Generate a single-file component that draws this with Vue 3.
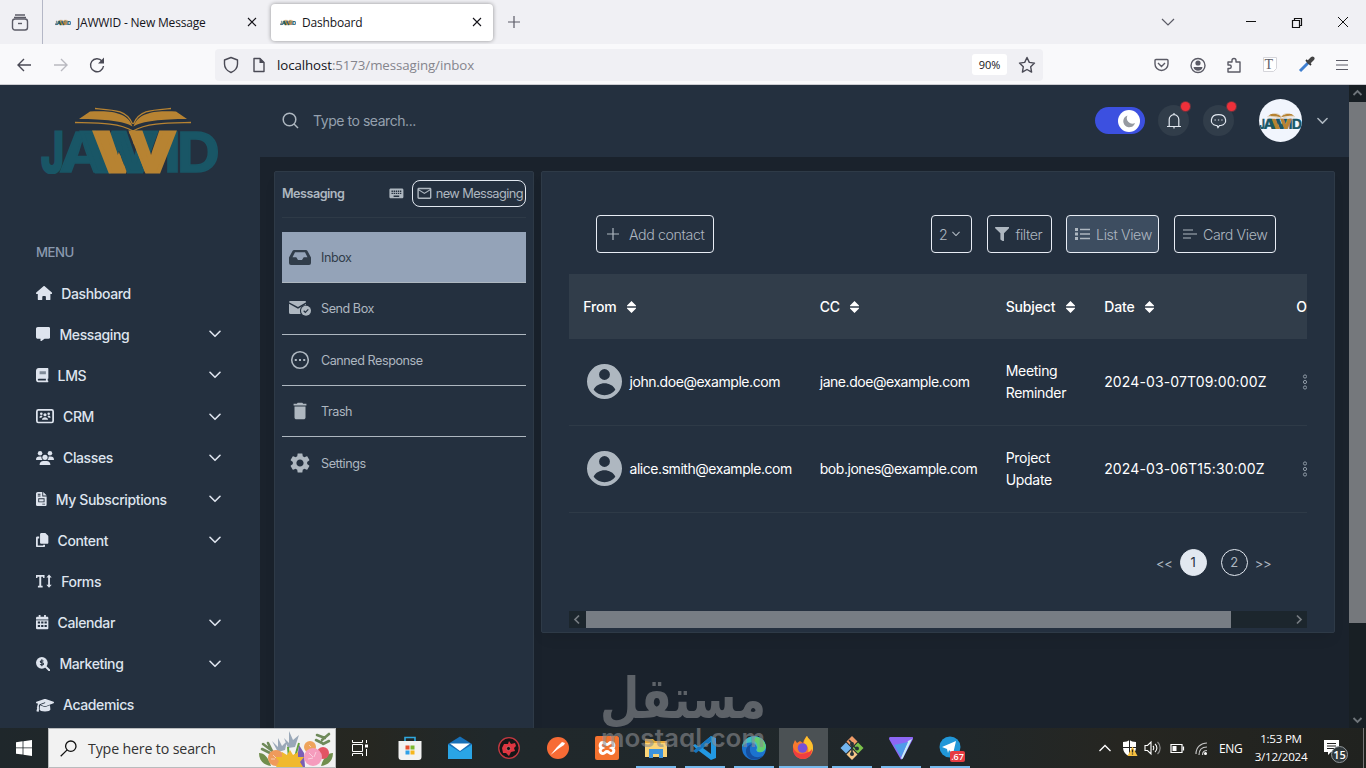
<template>
  <div class="screen">
    <!-- shared icons -->
    <svg class="sprite" width="0" height="0">
      <clipPath id="weave"><path d="M40 20h29l19 48H40zM87 20h60v48h-41z" /></clipPath>
      <symbol id="logo" viewBox="0 0 180 67">
        <g fill="#195666" stroke="#195666" stroke-width="1.500" font-family="Inter, sans-serif" font-weight="700" font-size="55">
          <text x="1" y="65" textLength="23" lengthAdjust="spacingAndGlyphs" stroke-width="3">J</text>
          <text x="19" y="65" textLength="47" lengthAdjust="spacingAndGlyphs">A</text>
          <text x="40" y="65" textLength="78" lengthAdjust="spacingAndGlyphs" stroke-width="3">W</text>
          <text x="124" y="65" textLength="17" lengthAdjust="spacingAndGlyphs">I</text>
          <text x="137" y="65" textLength="43" lengthAdjust="spacingAndGlyphs">D</text>
          <g clip-path="url(#weave)"><text x="53" y="65" textLength="83" lengthAdjust="spacingAndGlyphs" fill="#b78332" stroke="#b78332" stroke-width="3">W</text></g>
        </g>
        <g fill="#b78332">
          <path d="M39 12 50 4.500C68 4 87 4 92.500 19.500 84 14 64 12 39 12z" />
          <path d="M147 12 136 4.500C118 4 99 4 93.500 19.500 102 14 122 12 147 12z" />
        </g>
        <g fill="none" stroke="#b78332" stroke-width="1.300">
          <path d="M55 1.500C74 3 87 3 92.500 17M131 1.500C112 3 99 3 93.500 17" />
          <path d="M35 15.500c22 .5 44 0 58 8.500 14-8.500 36-8 58-8.500" />
        </g>
      </symbol>
      <symbol id="home" viewBox="0 0 576 512"><path d="M575.800 255.500c0 18-15 32.100-32 32.100h-32l.7 160.200V472c0 22.100-17.900 40-40 40H392c-22.100 0-40-17.900-40-40v-88c0-17.700-14.300-32-32-32h-64c-17.700 0-32 14.300-32 32v88c0 22.100-17.900 40-40 40h-80c-22.100 0-40-17.900-40-40V287.600H32c-18 0-32-14-32-32.100 0-9 3-17 10-24L266.400 8c7-7 15-8 22-8s15 2 21 7l255.400 224.500c8 7 12 15 11 24z" /></symbol>
      <symbol id="message" viewBox="0 0 512 512"><path d="M64 0C29 0 0 29 0 64v288c0 35 29 64 64 64h96v80c0 14 12 20 26 10l119-90h143c35 0 64-29 64-64V64c0-35-29-64-64-64z" /></symbol>
      <symbol id="book" viewBox="0 0 448 512">
        <path fill-rule="evenodd" d="M96 0C43 0 0 43 0 96v320c0 53 43 96 96 96h320c17.700 0 32-14.300 32-32s-14.300-32-32-32v-64c17.700 0 32-14.300 32-32V32c0-17.700-14.300-32-32-32zm0 384h256v64H96a32 32 0 0 1 0-64z" />
        <path fill="#808b98" d="M128 112h224v112H128z" />
      </symbol>
      <symbol id="crm" viewBox="0 0 576 460">
        <rect x="28" y="28" width="520" height="404" rx="50" fill="none" stroke="currentColor" stroke-width="56" />
        <circle cx="170" cy="150" r="42" /><circle cx="406" cy="150" r="42" /><circle cx="288" cy="182" r="50" />
        <path d="M110 280c0-80 80-90 100-50-25 20-30 30-34 50zM466 280c0-80-80-90-100-50 25 20 30 30 34 50zM190 346c0-110 196-110 196 0z" />
      </symbol>
      <symbol id="users" viewBox="0 0 640 512">
        <circle cx="144" cy="80" r="80" /><circle cx="496" cy="80" r="80" /><circle cx="320" cy="224" r="92" />
        <path d="M0 298c0-59 48-106 107-106h43c16 0 31 4 45 10-10 50 3 90 40 118H21c-11 0-21-10-21-22zM640 298c0-59-48-106-107-106h-43c-16 0-31 4-45 10 10 50-3 90-40 118h214c11 0 21-10 21-22zM128 485c0-74 60-133 133-133h118c73 0 133 59 133 133 0 15-12 27-27 27H155c-15 0-27-12-27-27z" />
      </symbol>
      <symbol id="invoice" viewBox="0 0 384 512">
        <path fill-rule="evenodd" d="M64 0C29 0 0 29 0 64v384c0 35 29 64 64 64h256c35 0 64-29 64-64V160H224V0zm192 0v128h128zM64 64h96v32H64zm0 64h96v32H64zm16 96h224v144H80zm32 32v80h160v-80zm112 160h96v32h-96z" />
      </symbol>
      <symbol id="copy" viewBox="0 0 448 512">
        <path d="M192 0h124c13 0 25 5 34 14l84 84c9 9 14 21 14 34v204c0 26-21 48-48 48H192c-26 0-48-22-48-48V48c0-27 22-48 48-48zM48 128h66v64H64v256h192v-32h64v48c0 26-21 48-48 48H48c-27 0-48-22-48-48V176c0-27 21-48 48-48z" />
      </symbol>
      <symbol id="textheight" viewBox="0 0 576 512">
        <path d="M0 32h304v110h-52V96h-66v324h50v60H68v-60h50V96H52v46H0zM464 20l96 108h-64v256h64l-96 108-96-108h64V128h-64z" />
      </symbol>
      <symbol id="calendar" viewBox="0 0 448 512">
        <path fill-rule="evenodd" d="M96 0h64v64h128V0h64v64h48c27 0 48 21 48 48v32H0v-32c0-27 21-48 48-48h48zM0 184h448v280c0 27-21 48-48 48H48c-27 0-48-21-48-48zm64 50v70h80v-70zm120 0v70h80v-70zm120 0v70h80v-70zM64 354v70h80v-70zm120 0v70h80v-70zm120 0v70h80v-70z" />
        <path fill="#808b98" d="M0 144h448v40H0z" />
      </symbol>
      <symbol id="searchdollar" viewBox="0 0 512 512">
        <circle cx="208" cy="208" r="208" /><path d="m340 290 164 164a28 28 0 0 1 0 40l-10 10a28 28 0 0 1-40 0L290 340z" />
        <path d="M268 150c-30-26-116-26-116 18 0 56 116 22 116 78 0 46-90 44-122 14M208 84v248" fill="none" stroke="#24303f" stroke-width="38" />
      </symbol>
      <symbol id="cap" viewBox="0 0 640 512">
        <path d="M320 32c-8 0-16 1-24 4L16 137c-21 8-21 38 0 46l58 21c-20 28-28 60-28 96-22 10-20 40-2 50L18 456c-4 12 4 20 14 24l64 8c10-40 16-100 0-138 18-12 18-36 2-48 2-34 12-60 34-76l188-76 12 28-166 66 130 47c16 6 32 6 48 0l280-108c21-8 21-38 0-46L344 36c-8-3-16-4-24-4zM128 408c0 36 86 72 192 72s192-36 192-72l-15-146-142 51c-22 8-48 8-70 0l-142-51z" />
      </symbol>
      <symbol id="chev" viewBox="0 0 12 8"><path d="m1 1.300 5 5 5-5" fill="none" stroke="currentColor" stroke-width="1.600" stroke-linecap="round" stroke-linejoin="round" /></symbol>
      <symbol id="inbox" viewBox="0 0 22 15"><path fill-rule="evenodd" d="M5.200 0h11.600c.8 0 1.300.3 1.700 1L22 7.500V13a2 2 0 0 1-2 2H2a2 2 0 0 1-2-2V7.500L3.500 1c.4-.7.900-1 1.700-1zM6 2.200 3.500 7.300h3.800L9 10h4l1.700-2.700h3.800L16 2.200z" /></symbol>
      <symbol id="mailcheck" viewBox="0 0 22 15">
        <path d="M1.500 0h14.300c.7 0 1.300.5 1.300 1.200L9 6 0 1.300C.1.500.7 0 1.500 0zM0 2.700l9 5 8-4.700v1.300c-4 0-6.200 2.600-6 6 0 1.100.3 2 .7 2.700H1.500A1.500 1.500 0 0 1 0 11.500z" />
        <circle cx="17" cy="9.700" r="5" /><path d="m14.700 9.800 1.600 1.500 3-3" fill="none" stroke="#24303f" stroke-width="1.200" />
      </symbol>
      <symbol id="canned" viewBox="0 0 20 20"><circle cx="10" cy="10" r="8.300" fill="none" stroke="currentColor" stroke-width="1.600" /><path d="M4.800 9h2v2h-2zM9 9h2v2H9zM13.200 9h2v2h-2z" /></symbol>
      <symbol id="trash" viewBox="0 0 24 24"><path d="M6 19c0 1.100.9 2 2 2h8c1.100 0 2-.9 2-2V7H6v12zM19 4h-3.500l-1-1h-5l-1 1H5v2h14V4z" /></symbol>
      <symbol id="gear" viewBox="0 0 24 24"><path d="M19.140 12.940c.04-.3.06-.61.06-.94 0-.32-.02-.64-.07-.94l2.030-1.580c.18-.14.23-.41.12-.61l-1.920-3.320c-.12-.22-.37-.29-.59-.22l-2.390.96c-.5-.38-1.030-.7-1.620-.94l-.36-2.540c-.04-.24-.24-.41-.48-.41h-3.840c-.24 0-.43.17-.47.41l-.36 2.540c-.59.24-1.130.57-1.620.94l-2.390-.96c-.22-.08-.47 0-.59.22L2.740 8.870c-.12.21-.08.47.12.61l2.030 1.580c-.05.3-.09.63-.09.94s.02.64.07.94l-2.030 1.580c-.18.14-.23.41-.12.61l1.920 3.320c.12.22.37.29.59.22l2.390-.96c.5.38 1.030.7 1.620.94l.36 2.540c.05.24.24.41.48.41h3.840c.24 0 .44-.17.47-.41l.36-2.540c.59-.24 1.130-.56 1.620-.94l2.390.96c.22.08.47 0 .59-.22l1.920-3.320c.12-.22.07-.47-.12-.61l-2.010-1.580zM12 15.600c-1.980 0-3.600-1.620-3.600-3.600s1.620-3.600 3.600-3.600 3.600 1.620 3.600 3.600-1.620 3.600-3.600 3.600z" /></symbol>
      <symbol id="person" viewBox="0 0 20 20"><path fill-rule="evenodd" d="M10 0a10 10 0 1 0 0 20 10 10 0 0 0 0-20zm0 2.900a3.100 3.100 0 1 1 0 6.200 3.100 3.100 0 0 1 0-6.200zm0 14.900c-2.500 0-4.800-1.100-6.200-3.100.9-2.400 3.800-3.700 6.200-3.700s5.300 1.300 6.200 3.700c-1.400 2-3.700 3.100-6.200 3.100z" /></symbol>
      <symbol id="close" viewBox="0 0 10 10"><path d="m1 1 8 8M9 1 1 9" fill="none" stroke="currentColor" stroke-width="1.100" /></symbol>
    </svg>

    <!-- browser -->
    <div class="tabs">
      <div class="recent">
        <svg width="18" height="17" viewBox="0 0 18 17" fill="none" stroke="#5b5b66" stroke-width="1.400"><path d="M4 1h10M3 3.500h12" /><rect x="1.500" y="5" width="15" height="11" rx="2.500" /><path d="M7 9.500h4" /></svg>
      </div>
      <div class="tab">
        <svg class="fav"><use href="#logo" /></svg><span>JAWWID - New Message</span>
        <svg class="x"><use href="#close" /></svg>
      </div>
      <div class="tab on">
        <svg class="fav"><use href="#logo" /></svg><span>Dashboard</span>
        <svg class="x"><use href="#close" /></svg>
      </div>
      <svg class="plus" width="12" height="12" viewBox="0 0 12 12"><path d="M6 0v12M0 6h12" stroke="#5b5b66" stroke-width="1.200" /></svg>
      <svg class="win" width="196" height="20" viewBox="0 0 196 20" fill="none">
        <path d="m5 7 6 6 6-6" stroke="#5b5b66" stroke-width="1.200" />
        <path d="M89 9.500h10" stroke="#111" />
        <path d="M135.500 8.500h7v7h-7zM137.500 8.500v-2h7v7h-2" stroke="#111" stroke-width="1.200" />
        <path d="m181 5 10 10M191 5l-10 10" stroke="#111" />
      </svg>
    </div>
    <div class="toolbar">
      <svg width="110" height="20" viewBox="0 0 110 20" fill="none" stroke="#4a4a55" stroke-width="1.400">
        <path d="M15 10H2M8 4l-6 6 6 6" /><path d="M38 10h13M45 4l6 6-6 6" stroke="#b9b9c0" />
        <path d="M86 6a6.500 6.500 0 1 0 1.500 5" /><path d="M88 2.500v6h-6z" fill="#4a4a55" stroke="none" />
      </svg>
      <div class="url">
        <svg width="46" height="18" viewBox="0 0 46 18" fill="none" stroke="#4a4a55" stroke-width="1.400">
          <path d="M8 1.500 14.500 4v4c0 4-3 7-6.500 8.500C4.500 15 1.500 12 1.500 8V4z" stroke-linejoin="round" />
          <path d="M31 2.500h6l4 4v9H31z" stroke-linejoin="round" /><path d="M36.500 2v5h5z" fill="#4a4a55" stroke="none" />
        </svg>
        <span class="addr"><b>localhost</b>:5173/messaging/inbox</span>
        <span class="zoom">90%</span>
        <svg width="18" height="18" viewBox="0 0 18 18"><path d="m9 1.500 2.300 4.900 5.200.7-3.800 3.700.9 5.300L9 13.500l-4.600 2.600.9-5.300L1.500 7.100l5.200-.7z" fill="none" stroke="#4a4a55" stroke-width="1.400" stroke-linejoin="round" /></svg>
      </div>
      <svg class="ext" width="196" height="18" viewBox="0 0 196 18" fill="none" stroke="#5b5b66" stroke-width="1.400">
        <path d="M3 3.500h11q1 0 1 1V8a6.500 6.500 0 0 1-13 0V4.500q0-1 1-1zM5 7l3.500 3.500L12 7" />
        <circle cx="45" cy="9.500" r="7" /><g fill="#5b5b66" stroke="none"><circle cx="45" cy="7" r="2.600" /><path d="M40.500 11h9c-.5 5-8.500 5-9 0z" /></g>
        <path d="M75 6h4V4.500a2 2 0 0 1 4 0V6h4v10H75v-3.500h1.500a1.700 1.700 0 0 0 0-3.500H75z" stroke-linejoin="round" />
        <path d="M110.500 1.500h13v11l-3 3h-10z" stroke="#d5d5da" fill="#fff" stroke-width="1" />
        <text x="111.500" y="13" font-family="Liberation Serif, serif" font-size="14" fill="#5f6068" stroke="none">T</text>
        <path d="m147 15 8-8" stroke="#3f7fd0" stroke-width="3" /><path d="m153 4 5 5" stroke="#333" stroke-width="1.800" /><path d="m156 6 3.500-3.500" stroke="#444" stroke-width="4" stroke-linecap="round" />
        <path d="M183 4.500h12M183 9h12M183 13.500h12" stroke-width="1.200" />
      </svg>
    </div>

    <!-- page -->
    <div class="page">
      <aside class="sidebar">
        <svg class="brand"><use href="#logo" /></svg>
        <h3>MENU</h3>
        <a v-for="m in menu" :key="m.label" class="mi">
          <svg :style="{ width: m.w + 'px' }"><use :href="'#' + m.icon" /></svg>
          <span>{{ m.label }}</span>
          <svg v-if="m.sub" class="chev"><use href="#chev" /></svg>
        </a>
      </aside>

      <div class="main">
        <header class="top">
          <svg width="17" height="17" viewBox="0 0 17 17" fill="none" stroke="#aeb7c0" stroke-width="1.500"><circle cx="7.500" cy="7.500" r="6.300" /><path d="m12 12 4 4" /></svg>
          <span class="ph">Type to search...</span>
          <div class="toggle"><div class="knob"><svg width="14" height="14" viewBox="0 0 14 14"><path d="M5.500 1.500a6 6 0 1 0 7.500 7.600 5.600 5.600 0 0 1-7.500-7.600z" fill="#969aa1" /></svg></div></div>
          <div class="round">
            <svg width="16" height="16" viewBox="0 0 16 16" fill="none" stroke="#e2e8f0" stroke-width="1.200"><path d="M3.200 13V6.500a4.800 4.800 0 0 1 9.600 0V13M1 13.500h14M8 13.500v2M8 0v1.500" /></svg>
            <i class="dot"></i>
          </div>
          <div class="round">
            <svg width="17" height="16" viewBox="0 0 17 16" fill="none" stroke="#e2e8f0" stroke-width="1.200"><path d="M6 12.500C-1 11 0 1.700 8.500 1.700S18 11 11 12.500H9.500l-1.500 2-1-2z" /><path d="M4.500 7h1.300M7.900 7h1.300M11.300 7h1.300" /></svg>
            <i class="dot far"></i>
          </div>
          <div class="avatar"><svg><use href="#logo" /></svg></div>
          <svg class="chev"><use href="#chev" /></svg>
        </header>

        <div class="cols">
          <section class="box folders">
            <div class="fhead">
              <b>Messaging</b>
              <svg width="16.800" height="16.800" viewBox="0 0 24 24" fill="#aeb7c0"><path d="M20 5H4c-1.100 0-1.990.9-1.990 2L2 17c0 1.100.9 2 2 2h16c1.100 0 2-.9 2-2V7c0-1.100-.9-2-2-2zm-9 3h2v2h-2V8zm0 3h2v2h-2v-2zM8 8h2v2H8V8zm0 3h2v2H8v-2zm-1 2H5v-2h2v2zm0-3H5V8h2v2zm9 7H8v-2h8v2zm0-4h-2v-2h2v2zm0-3h-2V8h2v2zm3 3h-2v-2h2v2zm0-3h-2V8h2v2z" /></svg>
              <button>
                <svg width="16.800" height="16.800" viewBox="0 0 24 24" fill="#aeb7c0"><path d="M22 6c0-1.100-.9-2-2-2H4c-1.100 0-2 .9-2 2v12c0 1.100.9 2 2 2h16c1.100 0 2-.9 2-2V6zm-2 0l-8 5-8-5h16zm0 12H4V8l8 5 8-5v10z" /></svg>
                <span>new Messaging</span>
              </button>
            </div>
            <div v-for="f in folders" :key="f.label" class="fi" :class="{ on: f.on }">
              <svg :style="{ width: f.w + 'px', height: f.h + 'px' }"><use :href="'#' + f.icon" /></svg>
              <span>{{ f.label }}</span>
            </div>
          </section>

          <section class="box content">
            <div class="actions">
              <button class="b-add"><svg width="12" height="12" viewBox="0 0 12 12"><path d="M6 0v12M0 6h12" stroke="#aeb7c0" stroke-width="1.200" /></svg>Add contact</button>
              <button class="b-num">2<svg width="8" height="6"><use href="#chev" /></svg></button>
              <button class="b-filter"><svg width="14.400" height="14.400" viewBox="0 0 512 512" fill="#aeb7c0"><path d="M487.976 0H24.028C2.710 0-8.047 25.866 7.058 40.971L192 225.941V432c0 7.831 3.821 15.170 10.237 19.662l80 55.980C298.020 518.690 320 507.493 320 487.980V225.941l184.947-184.970C520.021 25.896 509.338 0 487.976 0z" /></svg>filter</button>
              <button class="b-list"><svg width="15" height="12" viewBox="0 0 15 12"><path d="M5 1.500h10M5 6h10M5 10.500h10" stroke="#aeb7c0" stroke-width="1.300" /><path d="M0 0h3v3H0zM0 4.500h3v3H0zM0 9h3v3H0z" fill="#aeb7c0" /></svg>List View</button>
              <button class="b-card"><svg width="14" height="10" viewBox="0 0 14 10"><path d="M0 1h10M0 5h14M0 9h8" stroke="#aeb7c0" /></svg>Card View</button>
            </div>
            <div class="table">
              <div class="tr th">
                <div v-for="h in heads" :key="h">{{ h }}<svg v-if="h !== 'Options'" width="9" height="12" viewBox="0 0 9 12"><path d="M4.500 0 9 4.500V5.300H0V4.500zM4.500 12 9 7.500V6.700H0v.8z" fill="#fff" /></svg></div>
              </div>
              <div v-for="r in rows" :key="r.from" class="tr">
                <div class="from"><svg><use href="#person" /></svg>{{ r.from }}</div>
                <div>{{ r.cc }}</div>
                <div class="subj">{{ r.subject }}</div>
                <div class="date">{{ r.date }}</div>
                <div class="more"><svg width="6" height="16" viewBox="0 0 6 16" fill="none" stroke="#8f9aa6"><circle cx="3" cy="2.500" r="1.600" /><circle cx="3" cy="8" r="1.600" /><circle cx="3" cy="13.500" r="1.600" /></svg></div>
              </div>
            </div>
            <div class="pager"><span>&lt;&lt;</span><i class="on">1</i><i>2</i><span>&gt;&gt;</span></div>
            <div class="hbar">
              <svg width="17" height="17" viewBox="0 0 17 17"><path d="m10 4.500-4 4 4 4" fill="none" stroke="#777d83" stroke-width="1.700" /></svg>
              <div class="thumb"></div>
              <svg width="17" height="17" viewBox="0 0 17 17"><path d="m7 4.500 4 4-4 4" fill="none" stroke="#777d83" stroke-width="1.700" /></svg>
            </div>
          </section>
        </div>
      </div>

      <div class="vbar">
        <svg width="17" height="17" viewBox="0 0 17 17"><path d="m4.500 10 4-4 4 4" fill="none" stroke="#6f757a" stroke-width="1.800" /></svg>
        <div class="thumb"></div>
        <svg width="17" height="17" viewBox="0 0 17 17"><path d="m4.500 7 4 4 4-4" fill="none" stroke="#6f757a" stroke-width="1.800" /></svg>
      </div>
    </div>

    <!-- windows taskbar -->
    <div class="taskbar">
      <div class="start"><svg width="16" height="16" viewBox="0 0 16 16" fill="#fff"><path d="M0 2.200 6.600 1.300v6.200H0zM7.400 1.200 16 0v7.500H7.400zM0 8.300h6.600v6.300L0 13.700zM7.400 8.300H16V16l-8.600-1.200z" /></svg></div>
      <div class="find">
        <svg width="17" height="17" viewBox="0 0 17 17" fill="none" stroke="#111" stroke-width="1.300"><circle cx="10.800" cy="6.200" r="5.200" /><path d="M7.200 9.900.7 16.300" /></svg>
        <span>Type here to search</span>
        <svg class="flowers" width="74" height="36" viewBox="0 0 74 36">
          <g stroke="#6f8a5a" stroke-width="2.600" stroke-linecap="round"><path d="m4 13 8 6M9 12l4 8M3 18l8 4M58 4l8 3M70 3l-7 6M57 9l6 3M70 10l-6 3" /></g>
          <path d="M0 22c6 0 10 6 12 13C4 34 0 29 0 22zM74 22c-6 0-10 6-12 13 8-1 12-6 12-13z" fill="#708e4d" />
          <g fill="#9aa8b8"><path d="m13 10 6 6 0-9 4 8 5-5-2 9-7 2zM25 7l5 5 0-12 4 9 6-5-4 12-7 1z" /></g>
          <path d="m40 12-4 14M29 16l1 12" stroke="#65a33c" stroke-width="2" />
          <path d="m40 14 5 8 1 14h-9z" fill="#7b5fb5" /><circle cx="51" cy="16" r="6" fill="#efa45c" />
          <circle cx="17" cy="27" r="8" fill="#ef9a5b" /><circle cx="64" cy="22" r="6" fill="#e35464" />
          <circle cx="54" cy="26" r="9" fill="#f59cbd" />
          <path d="m17 36 3-6-4-4 7 0 0-5 5 3 3-5 3 5 5-3 0 5 6 0-4 5 3 5z" fill="#f0b92d" />
          <path d="M14 24l3 3M12 28h4M50 22l4 4M57 21l-2 5M49 28l5-1M50 14l2 2" stroke="#fff" stroke-opacity=".5" />
        </svg>
      </div>
      <div class="app first"><svg width="17" height="16" viewBox="0 0 17 16" fill="none" stroke="#fff"><path d="M.5 0v2.500h10V0M.5 16v-2.500h10V16M.5 4.500h10v7H.5zM14.500 0v3M14.500 9v7" /><path d="M13 4.500h3v3h-3z" fill="#fff" stroke="none" /></svg></div>
      <div class="app"><svg viewBox="0 0 24 24"><path d="M7 6V1.500h10V6" fill="none" stroke="#2fa8df" stroke-width="1.600" /><path d="M.5 5h23v16a3 3 0 0 1-3 3h-17a3 3 0 0 1-3-3z" fill="#f2f2f2" /><path d="M7.500 9.500h4v4h-4z" fill="#e64e2e" /><path d="M12.500 9.500h4v4h-4z" fill="#7cb82e" /><path d="M7.500 14.500h4v4h-4z" fill="#2fa0e8" /><path d="M12.500 14.500h4v4h-4z" fill="#f6b71c" /></svg></div>
      <div class="app"><svg viewBox="0 0 24 24"><path d="M0 8 12 .5 24 8v14H0z" fill="#1770b8" /><path d="M2 7.500h20L12 15z" fill="#fff" /><path d="M0 8.500 12 16l12-7.500V23H0z" fill="#2aa5e6" /></svg></div>
      <div class="app"><svg viewBox="0 0 24 24"><circle cx="12" cy="12" r="10.300" fill="#151617" stroke="#c33840" stroke-width="1.300" /><path d="m5 12 2-4 4 0 1-3 2 3 4-1 1 3-2 2 1 3-4 1-2 4-3-3-3 0z" fill="#df3540" /><circle cx="11.500" cy="12.500" r="2" fill="#151617" stroke="#e88" stroke-width=".5" /></svg></div>
      <div class="app"><svg viewBox="0 0 24 24"><circle cx="12" cy="12" r="11" fill="#f76b35" /><path d="M4.500 19 11 11l5-5 3 1-1 2-6 4z" fill="#fff" /></svg></div>
      <div class="app"><svg viewBox="0 0 24 24"><rect width="24" height="24" rx="2" fill="#f4722f" /><path d="M8 6.500c-3 0-4 4-1 5.500-3 1.500-2 5.500 1 5.500 2 0 2-2 4-2s2 2 4 2c3 0 4-4 1-5.500 3-1.500 2-5.500-1-5.500-2 0-2 2-4 2s-2-2-4-2z" fill="none" stroke="#fff" stroke-width="3" /></svg></div>
      <div class="app open"><svg viewBox="0 0 24 24"><path d="M1 3h8l2 2h12v15H1z" fill="#e4a93a" /><path d="M1 7h22v14H1z" fill="#fbd477" /><path d="M5 22v-9h14v9h-4v-4H9v4z" fill="#3d93dd" /></svg></div>
      <div class="app open"><svg viewBox="0 0 24 24"><path d="M18 0 5.500 10.500 2 8 0 9.500l4 4L18 24l5-2V2z" fill="#2298e2" /><path d="M18 6v12l-8-6z" fill="#20282c" /><path d="m0 15 3 2L18 5V0L6 10z" fill="#1775bd" /></svg></div>
      <div class="app open"><svg viewBox="0 0 24 24"><circle cx="12" cy="12" r="12" fill="#1c73cf" /><path d="M0 11C2-3 22-3 24 10c0 5-3 7-8 6-2-1-2-2-1-4C14 5 4 5 0 11z" fill="#3fc0c3" /><path d="M14 1c8 1 12 9 8 13-2 2-5 3-7 1 2-6-1-10-4-10z" fill="#62cf70" /><path d="M8 12c-1 8 6 11 13 8-7 7-18 3-17-6 1-4 4-6 7-6-2 1-3 2-3 4z" fill="#154e9f" /></svg></div>
      <div class="app open wide"><svg viewBox="0 0 24 24"><path d="M2 9 4 4l2 3 3-2 3 2c1-4 3-6 4-7 1 3 6 5 6 12 0 7-5 11-10 11S1 19 2 9z" fill="#f8792e" /><path d="M16 0c1 3 6 5 6 12 0 4-3 7-6 8 3-6 1-10-3-13 0-3 2-6 3-7z" fill="#fbc22d" /><circle cx="11.500" cy="12" r="4.800" fill="#7650d8" /><path d="M2 11c2 6 7 8 13 6 3-1 5-2 6-4 0 7-5 10-9 10S1 20 2 11z" fill="#f03e40" /></svg></div>
      <div class="app open"><svg viewBox="0 0 24 24"><path d="m12 0 5.500 5.500L12 11 6.500 5.500z" fill="#ef9b68" /><path d="m6 6.500 5.500 5.500L6 17.500.5 12z" fill="#72b5ef" /><path d="m18 6.500 5.500 5.500-5.500 5.500-5.500-5.500z" fill="#7cc24b" /><path d="m12 13 5.500 5.500L12 24l-5.500-5.500z" fill="#f4c688" /><path d="m9 4 3 3v11M12 9l5 4" stroke="#263238" stroke-width="1.600" fill="none" /><g fill="#263238"><circle cx="12" cy="8" r="2" /><circle cx="17" cy="12.500" r="2" /><circle cx="12" cy="18" r="2" /></g></svg></div>
      <div class="app open"><svg viewBox="0 0 24 24"><path d="M1 1h22q2 0 1 2L14 22q-2 3-3 0L0 3Q0 1 1 1z" fill="#8d67f5" /><path d="m19 5 4-2L14 22q-1 2-2 0z" fill="#c6eef6" /><path d="M5 9 19 6l-7 15z" fill="#4f9ce9" /></svg></div>
      <div class="app open"><svg viewBox="0 0 24 24"><circle cx="12" cy="11" r="10.500" fill="#2197d8" /><path d="m4 11 14-6-3 13-4-4-1 3-1-4z" fill="#fff" /></svg><em>.67</em></div>
      <div class="tray">
        <svg width="116" height="20" viewBox="0 0 116 20" fill="none" stroke="#fff" stroke-width="1.300">
          <path d="m.5 13 5.500-5.500 5.500 5.500" />
          <path d="M24 4c3 0 5-1 6.500-2C32 3 34 4 37 4v5c0 5-3 8-6.500 9C27 17 24 14 24 9z" fill="#fff" stroke="none" /><path d="M30.500 2v16M24 9.500h13" stroke="#222" stroke-width="1" />
          <path d="m33.500 8.500 5 9.500h-10z" fill="#f6c040" stroke="none" /><path d="M33.500 11.500v3M33.500 15.500v1" stroke="#222" />
          <path d="M46 7.500h2.500L52 4v12l-3.500-3.500H46zM54 8c1 1 1 3 0 4M56 6c2.500 2 2.500 6 0 8" stroke-width="1.100" /><path d="M58.500 4c3.500 3 3.500 9 0 12" stroke="#888" />
          <path d="M72 6.500h11v8H72zM84.500 8.500v4" stroke-width="1.200" /><path d="M73.500 8h4v5h-4z" fill="#fff" stroke="none" />
          <path d="M97 16c0-7 5-11 11-11M100 17c0-5 3-8 8-8M103.500 17c0-3 2-4.500 4.500-4.500" stroke="#c4c4c4" stroke-width="1.200" /><circle cx="106.500" cy="15.500" r="1.500" fill="#fff" stroke="none" />
        </svg>
        <span class="lang">ENG</span>
        <span class="clock">1:53 PM<br>3/12/2024</span>
        <div class="note">
          <svg width="16" height="16" viewBox="0 0 16 16"><path d="M0 0h15v12H7l-3 3v-3H0z" fill="#fff" /><path d="M3 3.500h9M3 6h9M3 8.500h9" stroke="#222" /></svg>
          <i>15</i>
        </div>
      </div>
    </div>

    <!-- watermark over everything -->
    <svg class="mark" width="170" height="90" viewBox="0 0 170 90">
      <text x="1" y="46" font-family="DejaVu Sans, sans-serif" font-weight="700" font-size="56" textLength="166" lengthAdjust="spacingAndGlyphs" direction="rtl" text-anchor="end">مستقل</text>
      <text x="2" y="75" font-family="Inter, sans-serif" font-weight="600" font-size="25" textLength="164" lengthAdjust="spacingAndGlyphs">mostaql.com</text>
    </svg>
  </div>
</template>

<script setup>
const menu = [
  { label: 'Dashboard', icon: 'home', w: 16.2 },
  { label: 'Messaging', icon: 'message', w: 14.4, sub: true },
  { label: 'LMS', icon: 'book', w: 12.6, sub: true },
  { label: 'CRM', icon: 'crm', w: 18, sub: true },
  { label: 'Classes', icon: 'users', w: 18, sub: true },
  { label: 'My Subscriptions', icon: 'invoice', w: 10.8, sub: true },
  { label: 'Content', icon: 'copy', w: 12.6, sub: true },
  { label: 'Forms', icon: 'textheight', w: 16.2 },
  { label: 'Calendar', icon: 'calendar', w: 12.6, sub: true },
  { label: 'Marketing', icon: 'searchdollar', w: 14.4, sub: true },
  { label: 'Academics', icon: 'cap', w: 18 }
]

const folders = [
  { label: 'Inbox', icon: 'inbox', w: 22, h: 15, on: true },
  { label: 'Send Box', icon: 'mailcheck', w: 22, h: 15 },
  { label: 'Canned Response', icon: 'canned', w: 20, h: 20 },
  { label: 'Trash', icon: 'trash', w: 22, h: 22 },
  { label: 'Settings', icon: 'gear', w: 24, h: 24 }
]

const heads = ['From', 'CC', 'Subject', 'Date', 'Options']

const rows = [
  { from: 'john.doe@example.com', cc: 'jane.doe@example.com', subject: 'Meeting Reminder', date: '2024-03-07T09:00:00Z' },
  { from: 'alice.smith@example.com', cc: 'bob.jones@example.com', subject: 'Project Update', date: '2024-03-06T15:30:00Z' }
]
</script>

<style>
body {
  margin: 0;
  overflow: hidden;
}
</style>

<style scoped>
.screen {
  position: relative;
  width: 1366px;
  height: 768px;
  overflow: hidden;
  display: flex;
  flex-direction: column;
  font-family: Inter, sans-serif;
  color: #aeb7c0;
}
.screen * {
  box-sizing: border-box;
}
.sprite {
  position: absolute;
}
svg {
  display: block;
  flex: none;
  fill: currentColor;
}
svg[fill="none"] {
  fill: none;
}
button {
  font: inherit;
  color: inherit;
  background: none;
  padding: 0;
  display: flex;
  align-items: center;
}

/* browser chrome */
.tabs {
  height: 44px;
  background: #f0f0f4;
  display: flex;
  align-items: center;
  font-family: "Open Sans", "Noto Sans", sans-serif;
  font-size: 12px;
  color: #15141a;
}
.recent {
  width: 43px;
  height: 44px;
  border-right: 1px solid #b4b7c6;
  display: flex;
  align-items: center;
  padding-left: 11px;
}
.tab {
  width: 222px;
  height: 37px;
  margin-left: 3px;
  padding: 0 11px 0 9px;
  display: flex;
  align-items: center;
  letter-spacing: -0.18px;
}
.tab.on {
  background: #fff;
  border-radius: 4px;
  box-shadow: 0 0 4px rgba(0, 0, 0, 0.4);
}
.fav {
  width: 16px;
  height: 7px;
  margin-right: 6px;
}
.x {
  width: 10px;
  height: 10px;
  margin-left: auto;
}
.plus {
  margin-left: 15px;
}
.win {
  margin-left: auto;
  margin-right: 13px;
}
.toolbar {
  height: 41px;
  background: #f9f9fb;
  border-bottom: 1px solid #cdcdd2;
  display: flex;
  align-items: center;
  padding: 1px 0 0 16px;
}
.url {
  margin-left: 89px;
  width: 828px;
  height: 32px;
  border-radius: 4px;
  background: #f0f0f4;
  display: flex;
  align-items: center;
  padding: 0 7px 0 8px;
  font-family: "Open Sans", "Noto Sans", sans-serif;
}
.addr {
  margin-left: 8px;
  font-size: 13.3px;
  letter-spacing: -0.09px;
  color: #85858d;
}
.addr b {
  font-weight: 400;
  color: #15141a;
}
.zoom {
  margin-left: auto;
  margin-right: 11px;
  width: 35px;
  height: 21px;
  line-height: 21px;
  text-align: center;
  border-radius: 3px;
  background: #fff;
  color: #15141a;
  font-size: 11px;
}
.ext {
  margin-left: 110px;
}

/* page */
.page {
  height: 643px;
  flex: none;
  display: flex;
  background: #1a222c;
}
.sidebar {
  width: 260px;
  height: 643px;
  overflow: hidden;
  background: #24303f;
  padding: 22px 36px 0;
}
.brand {
  width: 180px;
  height: 67px;
  margin-left: 4px;
}
h3 {
  margin: 70px 0 12.5px;
  font-size: 13.2px;
  line-height: 16px;
  font-weight: 500;
  color: #8a99af;
  letter-spacing: -0.45px;
}
.mi {
  height: 41.2px;
  display: flex;
  align-items: center;
  color: #dee4ee;
  font-size: 14px;
  font-weight: 500;
}
.mi svg {
  height: 14.4px;
}
.mi span {
  margin-left: 9px;
  letter-spacing: -0.38px;
}
.mi .chev {
  width: 12px;
  height: 8px;
  margin-left: auto;
  margin-right: 3px;
}
.main {
  width: 1089px;
}
.top {
  height: 72px;
  background: #24303f;
  display: flex;
  align-items: center;
  padding: 0 0 1px 22px;
}
.ph {
  width: 782px;
  margin-left: 14px;
  font-size: 14px;
  letter-spacing: -0.45px;
  color: #95a0ae;
}
.toggle {
  width: 50px;
  height: 27px;
  border-radius: 14px;
  background: #3c50e0;
  padding: 2.5px 5px 0 23px;
}
.knob {
  width: 22px;
  height: 22px;
  border-radius: 50%;
  background: #fff;
  display: flex;
  align-items: center;
  justify-content: center;
}
.round {
  position: relative;
  width: 31px;
  height: 31px;
  margin-left: 14px;
  border-radius: 50%;
  background: #313d4a;
  display: flex;
  align-items: center;
  justify-content: center;
}
.toggle + .round {
  margin-left: 13px;
}
.dot {
  position: absolute;
  top: -3px;
  right: -1px;
  width: 9px;
  height: 9px;
  border-radius: 50%;
  background: #ee303a;
  box-shadow: 0 0 0 1px #6b343f;
}
.dot.far {
  right: -2px;
}
.avatar {
  width: 43px;
  height: 43px;
  margin: 0 15px 0 25px;
  border-radius: 50%;
  background: #f1f5fd;
  overflow: hidden;
  display: flex;
  align-items: center;
}
.avatar svg {
  width: 43px;
  height: 16px;
}
.top .chev {
  width: 11px;
  height: 8px;
}
.cols {
  display: flex;
  align-items: flex-start;
  padding: 14px 14px 0;
}
.box {
  background: #24303f;
  border: 1px solid #2e3a47;
  border-radius: 2px;
  box-shadow: 0 8px 13px -3px rgba(0, 0, 0, 0.07);
}

/* folder list */
.folders {
  width: 260px;
  height: 570px;
  padding: 7px 7px 0;
  font-size: 12.6px;
  letter-spacing: -0.45px;
}
.fhead {
  height: 39px;
  margin-bottom: 14.2px;
  padding-bottom: 10px;
  border-bottom: 1px solid #2e3a47;
  display: flex;
  align-items: center;
}
.fhead b {
  font-weight: 600;
  width: 105.5px;
  letter-spacing: -0.5px;
}
.fhead button {
  height: 27px;
  width: 114px;
  margin-left: 7.7px;
  padding-left: 3px;
  border: 1px solid #e2e8f0;
  border-radius: 8px;
}
.fhead span {
  margin-left: 3px;
  letter-spacing: -0.6px;
  font-size: 12.8px;
  white-space: nowrap;
}
.fi {
  height: 51.2px;
  border-bottom: 1px solid #aeb7c0;
  display: grid;
  grid-template-columns: 35px 1fr;
  align-items: center;
  padding-left: 4px;
}
.fi svg {
  justify-self: center;
  margin-right: 7px;
}
.fi span {
  padding-top: 1px;
}
.fi:last-child {
  border: 0;
}
.fi.on {
  background: #94a3b8;
  color: #313d4a;
}

/* contacts */
.content {
  width: 794px;
  height: 462px;
  margin-left: 7px;
  padding: 43px 27px 0;
}
.actions {
  height: 38px;
  padding: 0 31px 0 27px;
  display: flex;
  font-size: 14.2px;
  font-weight: 300;
  letter-spacing: -0.38px;
}
.actions button {
  height: 38px;
  border: 1px solid #e8edf5;
  border-radius: 4px;
  padding-left: 8px;
  margin-left: 15px;
  gap: 6px;
  white-space: nowrap;
  letter-spacing: -0.38px;
}
.actions .b-add {
  width: 118px;
  margin: 0 auto 0 0;
  padding-left: 10px;
  gap: 10px;
}
.actions .b-num {
  width: 41px;
  gap: 5px;
  padding-left: 7px;
}
.actions .b-filter {
  width: 65px;
  padding-left: 7px;
}
.actions .b-list {
  width: 93px;
  margin-left: 14px;
  background: #3d4d60;
}
.actions .b-card {
  width: 102px;
}
.table {
  margin-top: 21px;
  width: 738px;
  overflow: hidden;
  color: #fff;
  font-size: 14px;
}
.tr {
  width: 820px;
  height: 87px;
  display: grid;
  grid-template-columns: 236.5px 186px 98.5px 192px 107px;
  align-items: center;
  border-bottom: 1px solid #2e3a47;
  letter-spacing: -0.45px;
}
.tr > div {
  padding-left: 14.2px;
  padding-bottom: 1px;
  display: flex;
  align-items: center;
}
.th {
  height: 65px;
  border: 0;
  background: #313d4a;
  font-weight: 500;
  letter-spacing: -0.15px;
}
.th > div {
  padding-bottom: 0;
}
.th svg {
  margin-left: 10.5px;
}
.tr .from {
  padding-left: 18px;
}
.from svg {
  width: 35px;
  height: 35px;
  margin-right: 7.5px;
  color: #aeb7c0;
}
.tr .subj {
  line-height: 21.6px;
  padding-bottom: 0;
  letter-spacing: -0.3px;
}
.date {
  letter-spacing: 0.13px;
}
.tr .more {
  padding-left: 20px;
}
.pager {
  height: 27px;
  margin: 36px 35.5px 0 0;
  display: flex;
  justify-content: flex-end;
  align-items: center;
  font-size: 13px;
}
.pager span {
  font-size: 13px;
  letter-spacing: -0.2px;
  padding-top: 2px;
}
.pager i {
  width: 27px;
  height: 27px;
  margin: 0 7px;
  border: 1px solid #e2e8f0;
  border-radius: 50%;
  line-height: 25px;
  text-align: center;
  font-style: normal;
}
.pager i.on {
  background: #e2e8f0;
  color: #24303f;
}
.hbar {
  height: 17px;
  margin-top: 35px;
  background: #1c262d;
  display: flex;
}
.hbar .thumb {
  width: 645px;
  margin-right: auto;
  background: #777d84;
}
.vbar {
  width: 17px;
  background: #181f24;
  display: flex;
  flex-direction: column;
  justify-content: space-between;
}
.vbar .thumb {
  height: 521px;
  margin-bottom: auto;
  background: #75787c;
}

/* taskbar */
.taskbar {
  height: 40px;
  flex: none;
  background: linear-gradient(90deg, #1f272b, #262721 27%, #20282b 36%, #20272a 70%, #262621 82%, #20221f);
  display: flex;
  color: #fff;
  font-family: "Open Sans", "Noto Sans", sans-serif;
}
.start {
  width: 48px;
  display: flex;
  align-items: center;
  justify-content: center;
}
.find {
  width: 288px;
  height: 40px;
  border: 1px solid #b9bbbd;
  background: #f2f2f2;
  color: #333;
  display: flex;
  align-items: center;
  padding-left: 11px;
  font-size: 14.2px;
}
.find span {
  margin-left: 11px;
  letter-spacing: -0.15px;
}
.flowers {
  margin: 2px 2px 0 auto;
}
.app {
  position: relative;
  width: 49.1px;
  display: flex;
  align-items: center;
  justify-content: center;
}
.app.first {
  width: 49.9px;
}
.app svg[viewBox="0 0 24 24"] {
  width: 24px;
  height: 24px;
}
.app.open {
  background: linear-gradient(#76b9ed, #76b9ed) center bottom / 40px 2px no-repeat;
}
.app.wide {
  background: linear-gradient(#76b9ed, #76b9ed) center bottom / 49px 2px no-repeat, #4b5154;
}
.app em {
  position: absolute;
  right: 10px;
  bottom: 6px;
  width: 15px;
  height: 11px;
  border-radius: 2px;
  background: #e63b42;
  font: 600 9px/11px "Open Sans", sans-serif;
  text-align: center;
}
.tray {
  margin-left: auto;
  display: flex;
  align-items: center;
  font-size: 12px;
}
.lang {
  width: 24px;
  margin-left: 4px;
  letter-spacing: -0.3px;
}
.clock {
  width: 64px;
  margin-left: 6px;
  text-align: center;
  line-height: 18px;
  font-size: 11.6px;
  letter-spacing: -0.25px;
  white-space: nowrap;
}
.note {
  position: relative;
  width: 40px;
  height: 40px;
  margin-left: 11px;
  padding-top: 12px;
  border-right: 1px solid #777;
  margin-right: 2px;
}
.note i {
  position: absolute;
  left: 7px;
  top: 18px;
  width: 17px;
  height: 17px;
  border: 1px solid #90969a;
  border-radius: 50%;
  background: #30383b;
  font: 600 11px/15px "Open Sans", sans-serif;
  text-align: center;
}
.mark {
  position: absolute;
  left: 599px;
  top: 672px;
  opacity: 0.6;
  fill: #8b8d91;
}
</style>
